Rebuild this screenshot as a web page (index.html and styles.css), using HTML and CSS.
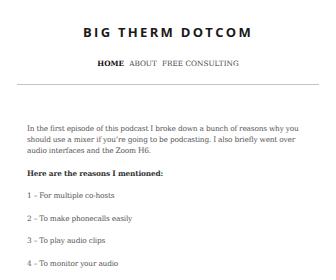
FILE: index.html
```html
<!DOCTYPE html>
<html>
<head>
<meta charset="utf-8">
<link rel="stylesheet" href="styles.css">
</head>
<body>
<div class="page">
  <header class="site-header">
    <h1 class="site-title">BIG THERM DOTCOM</h1>
    <nav class="site-nav">
      <a class="nav-item current">HOME</a>
      <a class="nav-item">ABOUT</a>
      <a class="nav-item">FREE CONSULTING</a>
    </nav>
  </header>
  <main class="entry">
    <p>In the first episode of this podcast I broke down a bunch of reasons why you should use a mixer if you’re going to be podcasting. I also briefly went over audio interfaces and the Zoom H6.</p>
    <p><strong>Here are the reasons I mentioned:</strong></p>
    <p>1 – For multiple co-hosts</p>
    <p>2 – To make phonecalls easily</p>
    <p>3 – To play audio clips</p>
    <p>4 – To monitor your audio</p>
  </main>
</div>
</body>
</html>
```
FILE: styles.css
```css
html, body {
  margin: 0;
  padding: 0;
  background: #fff;
}
.page {
  width: 336px;
  height: 280px;
  overflow: hidden;
}
.site-header {
  margin: 0 17px;
  padding-top: 24px;
  padding-bottom: 15px;
  border-bottom: 1px solid #c4c4c4;
  text-align: center;
}
.site-title {
  margin: 0;
  font-family: "Open Sans", sans-serif;
  font-weight: 700;
  font-size: 13px;
  line-height: 16px;
  letter-spacing: 2.3px;
  color: #1a1a1a;
}
.site-nav {
  margin-top: 19px;
  display: flex;
  justify-content: center;
  gap: 5px;
  font-family: "DejaVu Serif", serif;
  font-size: 7.3px;
  line-height: 10px;
  letter-spacing: 0;
}
.nav-item {
  color: #444;
}
.nav-item.current {
  color: #111;
  font-weight: 700;
}
.entry {
  padding: 38px 20px 0 27px;
  font-family: "DejaVu Serif", serif;
  font-size: 7.4px;
  letter-spacing: -0.2px;
  line-height: 11px;
  color: #555;
}
.entry p {
  margin: 0 0 11.5px 0;
}
.entry strong {
  color: #333;
}
```
